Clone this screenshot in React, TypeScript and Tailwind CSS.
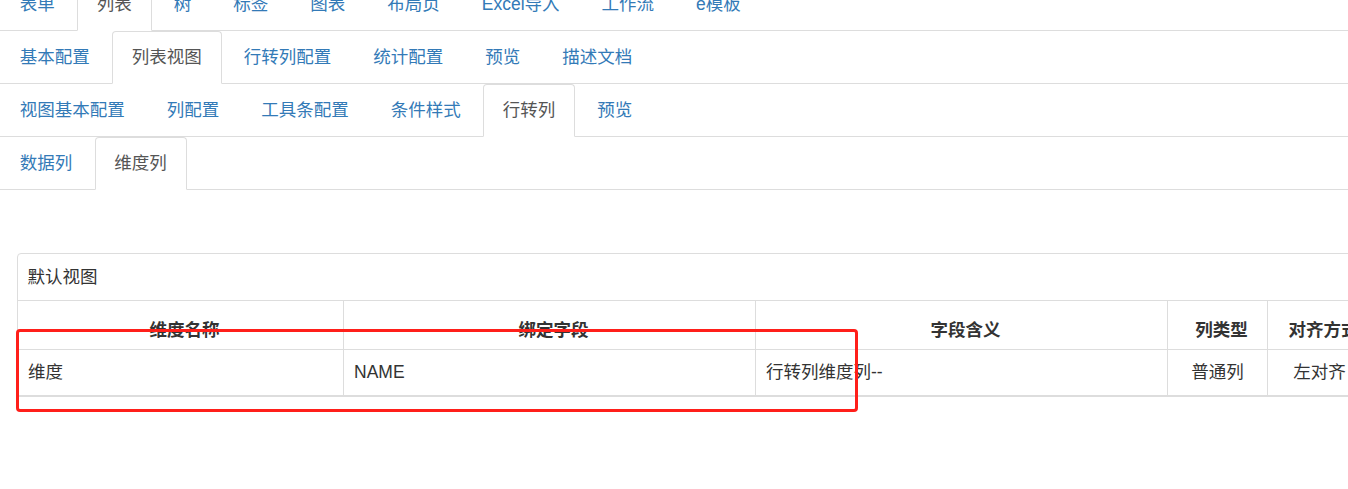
import React from "react";

type Tab = { label: string; active?: boolean };

const rows: Tab[][] = [
  [
    { label: "表单" },
    { label: "列表", active: true },
    { label: "树" },
    { label: "标签" },
    { label: "图表" },
    { label: "布局页" },
    { label: "Excel导入" },
    { label: "工作流" },
    { label: "e模板" },
  ],
  [
    { label: "基本配置" },
    { label: "列表视图", active: true },
    { label: "行转列配置" },
    { label: "统计配置" },
    { label: "预览" },
    { label: "描述文档" },
  ],
  [
    { label: "视图基本配置" },
    { label: "列配置" },
    { label: "工具条配置" },
    { label: "条件样式" },
    { label: "行转列", active: true },
    { label: "预览" },
  ],
  [{ label: "数据列" }, { label: "维度列", active: true }],
];

function TabRow({ tabs }: { tabs: Tab[] }) {
  return (
    <ul className="flex border-b border-[#ddd] h-[53px]">
      {tabs.map((t, i) => (
        <li
          key={i}
          className={
            t.active
              ? "-mb-px mr-[2.5px] h-[53px] flex items-center px-[18.75px] border border-[#ddd] border-b-white bg-white rounded-t-[4px] text-[#555] whitespace-nowrap"
              : "-mb-px mr-[2.5px] h-[53px] flex items-center px-[18.75px] border border-transparent text-[#337ab7] whitespace-nowrap"
          }
        >
          {t.label}
        </li>
      ))}
    </ul>
  );
}

export default function App() {
  return (
    <div
      className="relative w-[1348px] h-[489px] overflow-hidden bg-white text-[17.5px] leading-[25px] text-[#333]"
      style={{ fontFamily: '"Liberation Sans", "Noto Sans CJK SC", sans-serif' }}
    >
      <div className="mt-[-22px]">
        {rows.map((r, i) => (
          <TabRow key={i} tabs={r} />
        ))}

        <div className="mt-[63px] ml-[17px] w-[1400px] border border-[#ddd] rounded-tl-[4px]">
          <div className="h-[47px] border-b border-[#ddd] flex items-center pl-[9.5px]">
            默认视图
          </div>
          <div className="flex h-[49px] border-b border-[#ddd] font-bold">
            <div className="w-[326px] border-r border-[#ddd] flex items-end justify-center pl-[8px] pb-[6px]">
              维度名称
            </div>
            <div className="w-[412px] border-r border-[#ddd] flex items-end justify-center pl-[8px] pb-[6px]">
              绑定字段
            </div>
            <div className="w-[412px] border-r border-[#ddd] flex items-end justify-center pl-[8px] pb-[6px]">
              字段含义
            </div>
            <div className="w-[100px] border-r border-[#ddd] flex items-end justify-center pl-[8px] pb-[6px]">
              列类型
            </div>
            <div className="w-[104px] border-r border-[#ddd] flex items-end justify-center pl-[8px] pb-[6px] whitespace-nowrap">
              对齐方式
            </div>
          </div>
          <div className="flex h-[46px] border-b border-[#ddd]">
            <div className="w-[326px] border-r border-[#ddd] flex items-center pl-[10px]">
              维度
            </div>
            <div className="w-[412px] border-r border-[#ddd] flex items-center pl-[10px]">
              NAME
            </div>
            <div className="w-[412px] border-r border-[#ddd] flex items-center pl-[10px]">
              行转列维度列--
            </div>
            <div className="w-[100px] border-r border-[#ddd] flex items-center justify-center">
              普通列
            </div>
            <div className="w-[104px] border-r border-[#ddd] flex items-center justify-center">
              左对齐
            </div>
          </div>
        </div>
      </div>

      <div className="absolute left-[16px] top-[329px] w-[842px] h-[83px] border-[3px] border-[#ff1f1a] rounded-[4px]" />
    </div>
  );
}
